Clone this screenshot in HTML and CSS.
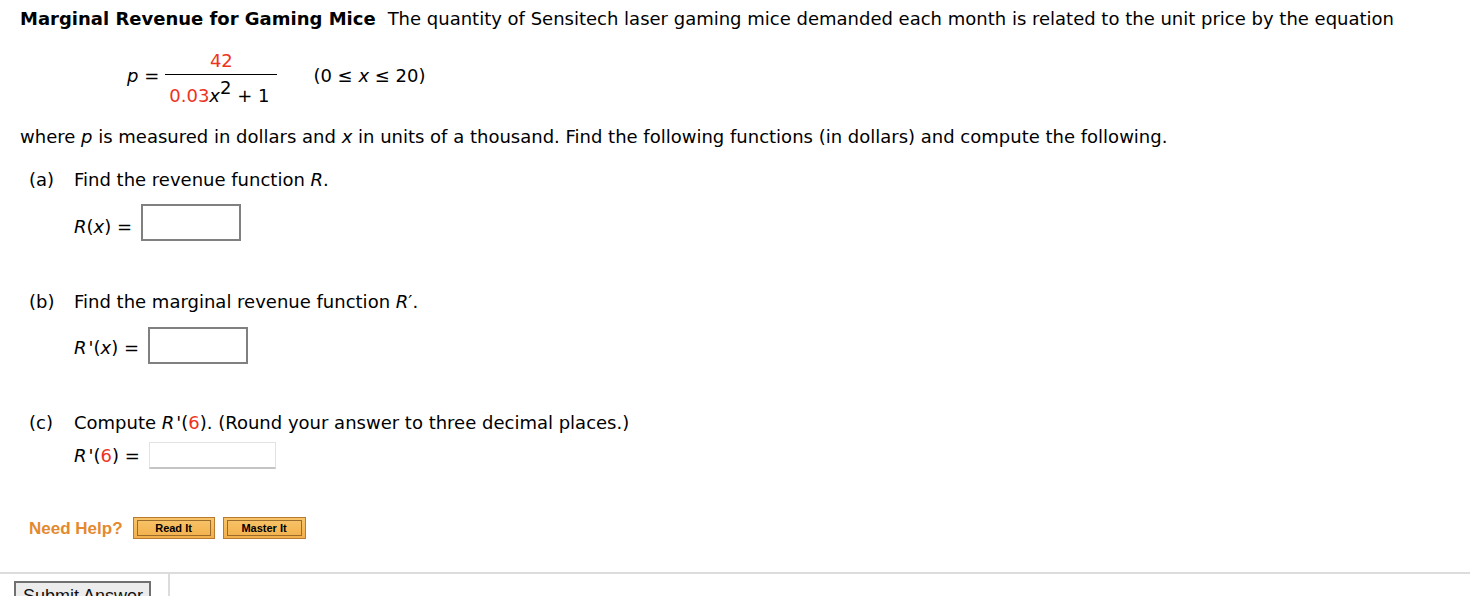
FILE: index.html
```html
<!DOCTYPE html>
<html>
<head>
<meta charset="utf-8">
<link rel="stylesheet" href="styles.css">
</head>
<body>
<div class="question">
  <p class="intro"><b class="title">Marginal Revenue for Gaming Mice</b><span class="gap"></span>The quantity of Sensitech laser gaming mice demanded each month is related to the unit price by the equation</p>
  <div class="equation">
    <span class="lhs"><i>p</i> =</span>
    <span class="frac">
      <span class="num red">42</span>
      <span class="den"><span class="red">0.03</span><i>x</i><span class="sup">2</span> + 1</span>
    </span>
    <span class="domain">(0 ≤ <i>x</i> ≤ 20)</span>
  </div>
  <p class="where">where <i>p</i> is measured in dollars and <i>x</i> in units of a thousand. Find the following functions (in dollars) and compute the following.</p>

  <div class="part part-a">
    <div class="part-head"><span class="label">(a)</span><span>Find the revenue function <i>R</i>.</span></div>
    <div class="answer-row row-a"><span class="ans-label"><i>R</i>(<i>x</i>) =</span><span class="box"></span></div>
  </div>

  <div class="part part-b">
    <div class="part-head"><span class="label">(b)</span><span>Find the marginal revenue function <i>R</i>′.</span></div>
    <div class="answer-row row-b"><span class="ans-label"><i class="rp">R</i>'(<i>x</i>) =</span><span class="box"></span></div>
  </div>

  <div class="part part-c">
    <div class="part-head"><span class="label">(c)</span><span>Compute <i class="rp">R</i>'(<span class="red">6</span>). (Round your answer to three decimal places.)</span></div>
    <div class="answer-row row-c"><span class="ans-label"><i class="rp">R</i>'(<span class="red">6</span>) =</span><span class="field"></span></div>
  </div>

  <div class="help">
    <span class="need">Need Help?</span>
    <span class="hbtn hbtn-read"><span>Read It</span></span>
    <span class="hbtn hbtn-master"><span>Master It</span></span>
  </div>
</div>
<div class="footer">
  <div class="submit-cell"><span class="submit">Submit Answer</span></div>
  <div class="rest"></div>
</div>
</body>
</html>
```
FILE: styles.css
```css
html, body {
  margin: 0;
  padding: 0;
  background: #fff;
}
body {
  font-family: "DejaVu Sans", Verdana, sans-serif;
  font-size: 18px;
  line-height: 20px;
  color: #000;
}
.question {
  padding: 9px 0 0 20px;
}
p { margin: 0; }
.title { font-weight: bold; }
.gap { display: inline-block; width: 12px; }
.red { color: #ee3322; }
.rp { margin-right: 2px; }

.equation {
  display: flex;
  align-items: flex-start;
  margin: 22px 0 0 107px;
}
.lhs { margin-top: 15px; margin-right: 6px; }
.frac {
  display: flex;
  flex-direction: column;
  align-items: stretch;
}
.num {
  display: block;
  text-align: center;
  padding-bottom: 3px;
  border-bottom: 1px solid #000;
}
.den {
  display: block;
  padding: 11px 8px 0 4px;
}
.sup {
  vertical-align: 8px;
  line-height: 0;
}
.domain { margin-left: 36px; margin-top: 15px; }

.where { margin-top: 21px; }

.part { padding-left: 9px; }
.part-head { display: flex; }
.label { width: 45px; }
.part-a { margin-top: 23px; }
.part-b { margin-top: 51px; }
.part-c { margin-top: 49px; }

.answer-row {
  display: flex;
  align-items: flex-start;
  padding-left: 45px;
}
.ans-label { margin-right: 9px; }
.row-a { margin-top: 14px; }
.row-a .ans-label { margin-top: 13px; }
.row-b { margin-top: 15px; }
.row-b .ans-label { margin-top: 11px; }
.row-c { margin-top: 9px; }
.row-c .ans-label { margin-top: 4px; }

.box {
  display: block;
  width: 96px;
  height: 33px;
  border: 2px solid #808080;
  background: #fff;
}
.field {
  display: block;
  width: 125px;
  height: 24px;
  border: 1px solid #e2e2e2;
  border-bottom: 2px solid #c4c4c4;
  background: #fff;
}

.help {
  display: flex;
  align-items: center;
  margin-top: 48px;
  padding-left: 9px;
  height: 22px;
}
.need {
  font-family: "Liberation Sans", Arial, sans-serif;
  font-weight: bold;
  font-size: 17px;
  color: #e38a2f;
  margin: 2px 10px 0 0;
}
.hbtn {
  display: block;
  border: 1px solid #b77a2e;
  background: linear-gradient(#f8c46a, #f2b04b);
  padding: 2px 3px;
  box-sizing: border-box;
  height: 22px;
  margin-right: 8px;
}
.hbtn span {
  display: flex;
  align-items: center;
  justify-content: center;
  height: 16px;
  border: 1px solid #9b6b2c;
  box-sizing: border-box;
  font-family: "Liberation Sans", Arial, sans-serif;
  font-weight: bold;
  font-size: 11px;
  line-height: 14px;
  color: #000;
}
.hbtn-read { width: 82px; }
.hbtn-master { width: 83px; }

.footer {
  display: flex;
  margin-top: 33px;
  border-top: 2px solid #dcdcdc;
  height: 40px;
}
.submit-cell {
  width: 170px;
  border-right: 2px solid #dcdcdc;
  padding: 7px 0 0 14px;
  box-sizing: border-box;
}
.submit {
  display: block;
  width: 137px;
  box-sizing: border-box;
  border: 2px solid #707070;
  background: #ececec;
  font-family: "Liberation Sans", Arial, sans-serif;
  font-size: 18px;
  line-height: 20px;
  padding: 3px 0 0 7px;
  color: #111;
}
.rest { flex: 1; }
```
